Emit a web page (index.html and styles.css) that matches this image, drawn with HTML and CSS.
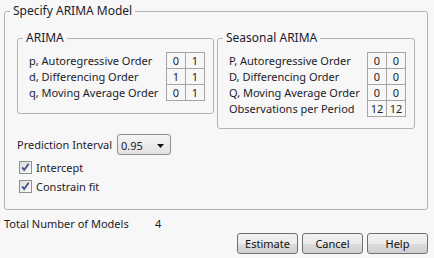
FILE: index.html
```html
<!DOCTYPE html>
<html lang="en">
<head>
    <meta charset="UTF-8">
    <title>Specify ARIMA Model</title>
    <link rel="stylesheet" href="styles.css">
</head>
<body>
    <div class="dialog">
        <fieldset class="group outer">
            <legend>Specify ARIMA Model</legend>
            <div class="panes">
                <fieldset class="group pane arima">
                    <legend>ARIMA</legend>
                    <table class="orders">
                        <tr><td class="lbl">p, Autoregressive Order</td><td class="num">0</td><td class="num">1</td></tr>
                        <tr><td class="lbl">d, Differencing Order</td><td class="num">1</td><td class="num">1</td></tr>
                        <tr><td class="lbl">q, Moving Average Order</td><td class="num">0</td><td class="num">1</td></tr>
                    </table>
                </fieldset>
                <fieldset class="group pane seasonal">
                    <legend>Seasonal ARIMA</legend>
                    <table class="orders">
                        <tr><td class="lbl">P, Autoregressive Order</td><td class="num">0</td><td class="num">0</td></tr>
                        <tr><td class="lbl">D, Differencing Order</td><td class="num">0</td><td class="num">0</td></tr>
                        <tr><td class="lbl">Q, Moving Average Order</td><td class="num">0</td><td class="num">0</td></tr>
                        <tr><td class="lbl">Observations per Period</td><td class="num">12</td><td class="num">12</td></tr>
                    </table>
                </fieldset>
            </div>
            <div class="interval">
                <span>Prediction Interval</span>
                <span class="combo">
                    <span>0.95</span>
                    <svg width="7" height="4" viewBox="0 0 7 4"><path d="M0 0h7L3.5 4z" fill="#111"/></svg>
                </span>
            </div>
            <label class="check">
                <svg class="box" width="13" height="13" viewBox="0 0 13 13">
                    <defs><linearGradient id="cb" x1="0" y1="0" x2="1" y2="1"><stop offset="0" stop-color="#dcdcdc"/><stop offset="1" stop-color="#fbfbfb"/></linearGradient></defs>
                    <rect x="0.5" y="0.5" width="12" height="12" fill="url(#cb)" stroke="#8e8f8f"/>
                    <path d="M3.2 6.4l2 2.6 4.4-6.2" fill="none" stroke="#3c4f8c" stroke-width="1.8"/>
                </svg>
                <span>Intercept</span>
            </label>
            <label class="check">
                <svg class="box" width="13" height="13" viewBox="0 0 13 13">
                    <rect x="0.5" y="0.5" width="12" height="12" fill="url(#cb)" stroke="#8e8f8f"/>
                    <path d="M3.2 6.4l2 2.6 4.4-6.2" fill="none" stroke="#3c4f8c" stroke-width="1.8"/>
                </svg>
                <span>Constrain fit</span>
            </label>
        </fieldset>
        <div class="total">
            <span class="total-label">Total Number of Models</span>
            <span>4</span>
        </div>
        <div class="buttons">
            <button class="btn">Estimate</button>
            <button class="btn">Cancel</button>
            <button class="btn">Help</button>
        </div>
    </div>
</body>
</html>
```

FILE: styles.css
```css
* {
    box-sizing: border-box;
    margin: 0;
    padding: 0;
}
body {
    background: #f7f7f7;
    font-family: "Noto Sans", "Open Sans", sans-serif;
    font-size: 11px;
    color: #1c1c2a;
}
.dialog {
    width: 434px;
    height: 258px;
    padding: 4px 0 0 4px;
}
.group {
    border: 1px solid #b4b4b4;
    border-radius: 3px;
}
.group legend {
    line-height: 14px;
    padding: 0 3px;
}
.outer {
    width: 424px;
    padding: 13px 12px 16px 12px;
}
.outer > legend {
    margin-left: -7px;
    font-size: 12px;
}
.panes {
    display: flex;
    align-items: flex-start;
    gap: 3px;
}
.pane {
    padding: 7px 8px 12px 11px;
}
.pane legend {
    margin-left: -6px;
    font-size: 12px;
}
.arima {
    width: 197px;
}
.seasonal {
    width: 198px;
    padding-bottom: 11px;
}
.orders {
    width: 100%;
    border-collapse: collapse;
}
.orders td {
    height: 16px;
    line-height: 15px;
    padding: 0;
    white-space: nowrap;
}
.orders .num {
    width: 19px;
    border: 1px solid #a6a6a6;
    text-align: center;
}
.interval {
    display: flex;
    align-items: center;
    gap: 5px;
    margin-top: 5px;
    height: 21px;
}
.combo {
    display: flex;
    align-items: center;
    justify-content: space-between;
    width: 54px;
    height: 21px;
    padding: 2px 6px 0 3px;
    border: 1px solid #8f8f8f;
    border-radius: 3px;
    background: linear-gradient(#f4f4f4, #e2e2e2);
}
.check {
    display: flex;
    align-items: center;
    gap: 4px;
    height: 13px;
    margin: 6px 0 0 2px;
}
.check + .check {
    margin-top: 6px;
}
.total {
    display: flex;
    height: 17px;
    margin-top: 5px;
    line-height: 17px;
}
.total-label {
    width: 151px;
}
.buttons {
    display: flex;
    justify-content: flex-end;
    gap: 4px;
    width: 424px;
    margin-top: 1px;
}
.btn {
    width: 61px;
    height: 21px;
    border: 1px solid #707070;
    border-radius: 3px;
    background: linear-gradient(#f2f2f2 0%, #ebebeb 50%, #dddddd 51%, #cfcfcf 100%);
    font: inherit;
    color: #111;
}
```
